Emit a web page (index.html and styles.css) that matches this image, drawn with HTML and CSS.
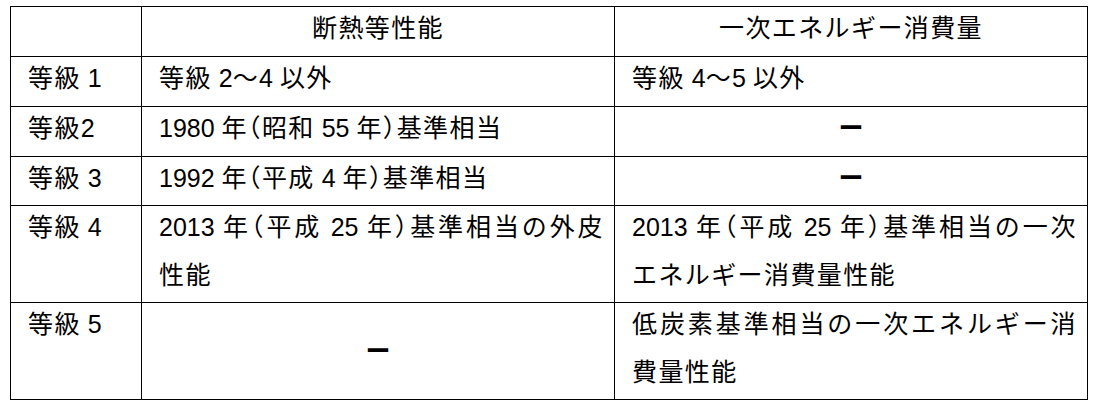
FILE: index.html
```html
<!DOCTYPE html>
<html lang="ja">
<head>
<meta charset="utf-8">
<link rel="stylesheet" href="styles.css">
</head>
<body>
<table class="grade-table">
  <colgroup>
    <col class="c1">
    <col class="c2">
    <col class="c3">
  </colgroup>
  <thead>
    <tr class="r-head tall">
      <th></th>
      <th><div class="t">断熱等性能</div></th>
      <th><div class="t">一次エネルギー消費量</div></th>
    </tr>
  </thead>
  <tbody>
    <tr class="tall">
      <td><div class="t">等級<span class="n"> 1</span></div></td>
      <td><div class="t">等級<span class="n"> 2</span>～<span class="n">4 </span>以外</div></td>
      <td><div class="t">等級<span class="n"> 4</span>～<span class="n">5 </span>以外</div></td>
    </tr>
    <tr class="tall">
      <td><div class="t">等級<span class="n">2</span></div></td>
      <td><div class="t"><span class="n">1980 </span>年<span class="p">（</span>昭和<span class="n"> 55 </span>年<span class="p">）</span>基準相当</div></td>
      <td class="dash"><div class="t">ー</div></td>
    </tr>
    <tr>
      <td><div class="t">等級<span class="n"> 3</span></div></td>
      <td><div class="t"><span class="n">1992 </span>年<span class="p">（</span>平成<span class="n"> 4 </span>年<span class="p">）</span>基準相当</div></td>
      <td class="dash"><div class="t">ー</div></td>
    </tr>
    <tr>
      <td><div class="t">等級<span class="n"> 4</span></div></td>
      <td>
        <div class="t">
          <div class="just"><span class="n">2013 </span>年<span class="p">（</span>平成<span class="n"> 25 </span>年<span class="p">）</span>基準相当の外皮</div>
          <div>性能</div>
        </div>
      </td>
      <td>
        <div class="t">
          <div class="just"><span class="n">2013 </span>年<span class="p">（</span>平成<span class="n"> 25 </span>年<span class="p">）</span>基準相当の一次</div>
          <div>エネルギー消費量性能</div>
        </div>
      </td>
    </tr>
    <tr>
      <td><div class="t">等級<span class="n"> 5</span></div></td>
      <td class="dash mid"><div class="t">ー</div></td>
      <td>
        <div class="t">
          <div class="just">低炭素基準相当の一次エネルギー消</div>
          <div>費量性能</div>
        </div>
      </td>
    </tr>
  </tbody>
</table>
</body>
</html>
```

FILE: styles.css
```css
html, body {
  margin: 0;
  padding: 0;
  background: #fff;
}

body {
  font-family: "Liberation Sans Narrow", "Liberation Sans", "Noto Sans CJK JP", sans-serif;
  color: #000;
}

.grade-table {
  margin: 6px 0 0 10px;
  width: 1077px;
  table-layout: fixed;
  border-collapse: collapse;
  font-size: 25px;
  letter-spacing: 1.4px;
}

.c1 { width: 131px; }
.c2 { width: 473px; }
.c3 { width: 473px; }

.grade-table th,
.grade-table td {
  border: 1px solid #000;
  padding: 0 10px 0 17px;
  line-height: 48px;
  vertical-align: top;
  text-align: left;
  font-weight: normal;
  white-space: nowrap;
}

.grade-table .tall th,
.grade-table .tall td {
  padding-bottom: 1px;
}

.grade-table th {
  text-align: center;
  padding-left: 0;
  padding-right: 0;
}

.t {
  margin-top: -3px;
  margin-bottom: 3px;
}

.just {
  white-space: normal;
  text-align: justify;
  text-align-last: justify;
  text-justify: inter-character;
}

.n {
  letter-spacing: 0;
}

.p {
  font-feature-settings: "halt" 1;
}

.grade-table td.dash {
  text-align: center;
  padding-left: 0;
  padding-right: 0;
  letter-spacing: 0;
  font-weight: bold;
}

.grade-table td.mid {
  vertical-align: middle;
}

.grade-table td.mid .t {
  margin: 0;
}
```
